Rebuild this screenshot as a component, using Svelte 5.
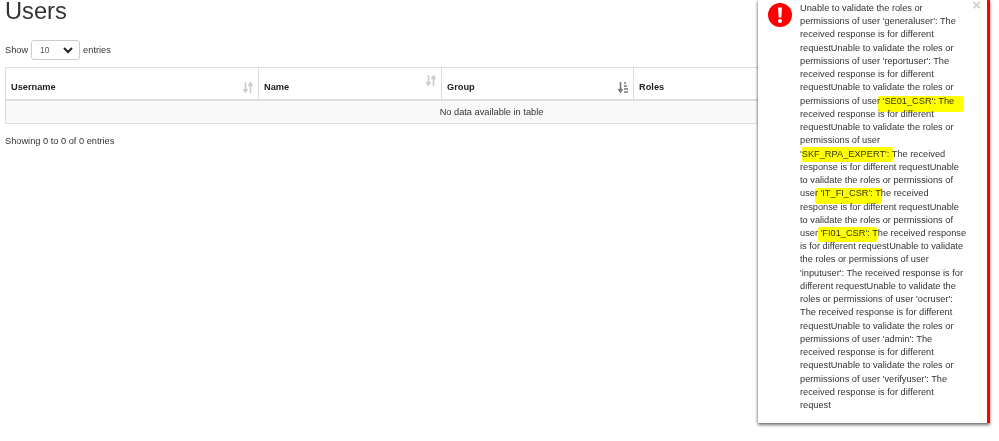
<script>
  const columns = [
    { label: 'Username', width: 253, sort: 'none' },
    { label: 'Name', width: 183, sort: 'raised' },
    { label: 'Group', width: 192, sort: 'active' },
    { label: 'Roles', width: 344, sort: 'none' }
  ];

  const message =
    "Unable to validate the roles or permissions of user 'generaluser': The received response is for different request" +
    "Unable to validate the roles or permissions of user 'reportuser': The received response is for different request" +
    "Unable to validate the roles or permissions of user 'SE01_CSR': The received response is for different request" +
    "Unable to validate the roles or permissions of user 'SKF_RPA_EXPERT': The received response is for different request" +
    "Unable to validate the roles or permissions of user 'IT_FI_CSR': The received response is for different request" +
    "Unable to validate the roles or permissions of user 'FI01_CSR': The received response is for different request" +
    "Unable to validate the roles or permissions of user 'inputuser': The received response is for different request" +
    "Unable to validate the roles or permissions of user 'ocruser': The received response is for different request" +
    "Unable to validate the roles or permissions of user 'admin': The received response is for different request" +
    "Unable to validate the roles or permissions of user 'verifyuser': The received response is for different request";

  // marker strokes drawn over the message, relative to the toast
  const marks = [
    { x: 120, y: 96, w: 85, h: 16 },
    { x: 44, y: 147, w: 91, h: 15 },
    { x: 57, y: 188, w: 67, h: 16 },
    { x: 60, y: 227, w: 59, h: 15 }
  ];
</script>

<main>
  <h1>Users</h1>

  <div class="length">
    <span>Show</span>
    <div class="select">
      <span>10</span>
      <svg width="10" height="7" viewBox="0 0 10 7"><path d="M1 1l4 4 4-4" fill="none" stroke="#222" stroke-width="2"/></svg>
    </div>
    <span>entries</span>
  </div>

  <table>
    <thead>
      <tr>
        {#each columns as col}
          <th style="width: {col.width}px">
            <div class="head">
              <span>{col.label}</span>
              {#if col.sort === 'active'}
                <svg class="sort" width="10" height="11" viewBox="0 0 10 11">
                  <path d="M2.500 0v8M0.500 7l2 3 2-3" fill="none" stroke="#777" stroke-width="1.6"/>
                  <path d="M6 1h2M6 4h3M6 7h4M6 10h4" fill="none" stroke="#777" stroke-width="1.3"/>
                </svg>
              {:else}
                <svg class="sort" class:raised={col.sort === 'raised'} width="10" height="11" viewBox="0 0 10 11">
                  <path d="M2.500 0v9M0.500 7l2 3 2-3" fill="none" stroke="#ccc" stroke-width="1.6"/>
                  <path d="M7.500 11V2M5.500 4l2-3 2 3" fill="none" stroke="#ccc" stroke-width="1.6"/>
                </svg>
              {/if}
            </div>
          </th>
        {/each}
      </tr>
    </thead>
    <tbody>
      <tr>
        <td colspan="4">No data available in table</td>
      </tr>
    </tbody>
  </table>

  <p class="info">Showing 0 to 0 of 0 entries</p>
</main>

<aside class="toast">
  <svg class="alert" width="24" height="24" viewBox="0 0 24 24">
    <circle cx="12" cy="12" r="12" fill="#f00"/>
    <path d="M10 4.500h4l-.7 10h-2.600z" fill="#fff"/>
    <circle cx="12" cy="18" r="2" fill="#fff"/>
  </svg>
  <p class="text">{message}</p>
  <span class="close">×</span>
  {#each marks as m}
    <i class="mark" style="left: {m.x}px; top: {m.y}px; width: {m.w}px; height: {m.h}px"></i>
  {/each}
</aside>

<style>
  :global(body) {
    background: #fff;
    overflow: hidden;
    font-family: "Liberation Sans", Arial, sans-serif;
    color: #333;
  }
  main {
    padding: 0 5px;
    width: 989px;
    height: 441px;
    box-sizing: border-box;
    overflow: hidden;
    font-size: 9.24px;
  }
  h1 {
    margin: 0;
    font-size: 23.7px;
    font-weight: 400;
    line-height: 22px;
    height: 40px;
  }
  .length {
    display: flex;
    align-items: center;
    gap: 3px;
    height: 20px;
    margin-bottom: 7px;
  }
  .select {
    box-sizing: border-box;
    width: 49px;
    height: 20px;
    border: 1px solid #ccc;
    border-radius: 3px;
    display: flex;
    align-items: center;
    justify-content: space-between;
    padding: 0 6px 0 8px;
    font-size: 8.5px;
    color: #555;
  }
  table {
    border-collapse: collapse;
    table-layout: fixed;
    width: 972px;
  }
  th {
    box-sizing: border-box;
    height: 32px;
    padding: 0 5px;
    border: 1px solid #ddd;
    border-bottom-width: 2px;
    text-align: left;
    font-weight: 700;
    color: #222;
  }
  .head {
    display: flex;
    justify-content: space-between;
    align-items: center;
    padding-top: 8px;
  }
  .sort.raised {
    margin-top: -13px;
  }
  td {
    box-sizing: border-box;
    height: 24px;
    padding: 1px 0 0;
    border: 1px solid #ddd;
    background: #f9f9f9;
    text-align: center;
  }
  .info {
    margin: 12px 0 0;
  }
  .toast {
    position: absolute;
    top: 0;
    left: 758px;
    width: 232px;
    height: 423px;
    box-sizing: border-box;
    padding: 2px 20px 0 42px;
    background: #fff;
    border-right: 3px solid #f00;
    box-shadow: 0 2px 3px rgba(0, 0, 0, 0.55), -1px 0 2px rgba(0, 0, 0, 0.15);
    font-size: 9.24px;
    line-height: 13.23px;
  }
  .alert {
    position: absolute;
    left: 10px;
    top: 3px;
  }
  .text {
    margin: 0;
  }
  .close {
    position: absolute;
    right: 6px;
    top: 0;
    font-size: 15px;
    font-weight: 700;
    line-height: 10px;
    color: #ccc;
  }
  .mark {
    position: absolute;
    border-radius: 2px;
    background: #ff0;
    mix-blend-mode: multiply;
  }
</style>
